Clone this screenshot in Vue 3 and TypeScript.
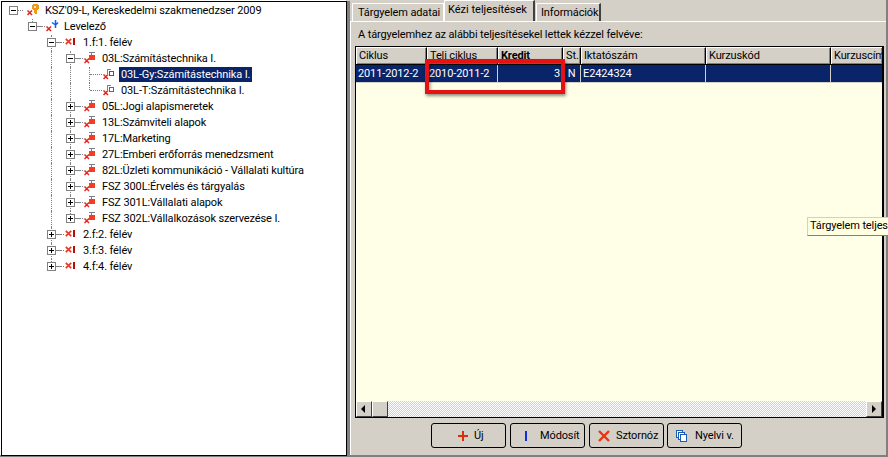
<script setup lang="ts">
type Kind = 'key' | 'branch' | 'sem' | 'subj' | 'blue' | 'red'
interface Row {
  label: string
  kind: Kind
  depth: number
  box?: '+' | '-'
  cells: string[]
  selected?: boolean
}
const subj = (label: string, last = false): Row => ({
  label, kind: 'subj', depth: 3, box: '+', cells: ['', '', 'pass', last ? 'last' : 'tee'],
})
const sem = (label: string, last = false): Row => ({
  label, kind: 'sem', depth: 2, box: '+', cells: ['', '', last ? 'last' : 'tee'],
})
const rows: Row[] = [
  { label: "KSZ'09-L, Kereskedelmi szakmenedzser 2009", kind: 'key', depth: 0, box: '-', cells: [''] },
  { label: 'Levelező', kind: 'branch', depth: 1, box: '-', cells: ['', 'last'] },
  { label: '1.f:1. félév', kind: 'sem', depth: 2, box: '-', cells: ['', '', 'tee'] },
  { label: '03L:Számítástechnika I.', kind: 'subj', depth: 3, box: '-', cells: ['', '', 'pass', 'tee'] },
  { label: '03L-Gy:Számítástechnika I.', kind: 'blue', depth: 4, cells: ['', '', 'pass', 'pass', 'tee'], selected: true },
  { label: '03L-T:Számítástechnika I.', kind: 'red', depth: 4, cells: ['', '', 'pass', 'pass', 'last'] },
  subj('05L:Jogi alapismeretek'),
  subj('13L:Számviteli alapok'),
  subj('17L:Marketing'),
  subj('27L:Emberi erőforrás menedzsment'),
  subj('82L:Üzleti kommunikáció - Vállalati kultúra'),
  subj('FSZ 300L:Érvelés és tárgyalás'),
  subj('FSZ 301L:Vállalati alapok'),
  subj('FSZ 302L:Vállalkozások szervezése I.', true),
  sem('2.f:2. félév'),
  sem('3.f:3. félév'),
  sem('4.f:4. félév', true),
]
const columns = [
  { title: 'Ciklus', width: 71, value: '2011-2012-2', align: 'left' },
  { title: 'Teli ciklus', width: 71, value: '2010-2011-2', align: 'left' },
  { title: 'Kredit', width: 65, value: '3', align: 'right', bold: true },
  { title: 'St.', width: 18, value: 'N', align: 'center' },
  { title: 'Iktatószám', width: 125, value: 'E2424324', align: 'left' },
  { title: 'Kurzuskód', width: 125, value: '', align: 'left' },
  { title: 'Kurzuscím', width: 52, value: '', align: 'left' },
]
const buttons = [
  { label: 'Új', icon: 'plus', gap: 'b-new' },
  { label: 'Módosít', icon: 'bar', gap: 'b-mod' },
  { label: 'Sztornóz', icon: 'x', gap: 'b-del' },
  { label: 'Nyelvi v.', icon: 'docs', gap: 'b-lang' },
]
</script>

<template>
  <div class="screen">
    <section class="tree">
      <div v-for="r in rows" :key="r.label" class="row">
        <span v-for="(c, i) in r.cells" :key="i" class="cell" :class="c">
          <span v-if="i === r.depth && r.box" class="box">
            <span class="h"></span><span v-if="r.box === '+'" class="v"></span>
          </span>
        </span>
        <svg class="ico" width="13" height="13" viewBox="0 0 13 13" shape-rendering="crispEdges">
          <template v-if="r.kind === 'key'">
            <path d="M6 1h5v1h1v4h-1v1h-1v4H8v-1H7V7H6V6H5V2h1z" fill="#f0981c" />
            <rect x="7" y="3" width="2" height="2" fill="#ffe8b0" />
          </template>
          <path v-else-if="r.kind === 'branch'" d="M9.500 1v8M9.500 6L12 3.500M9.500 6L6 3.500" stroke="#1060e8" stroke-width="1.500" fill="none" shape-rendering="auto" />
          <template v-else-if="r.kind === 'sem'">
            <rect x="8" y="3" width="2" height="7" fill="#b01010" />
          </template>
          <template v-else-if="r.kind === 'subj'">
            <path d="M5 1h6v1H8v2H7V2H5z" fill="#808080" />
            <rect x="5" y="4" width="6" height="5" fill="#f03c28" />
          </template>
          <template v-else>
            <path d="M4 2h4v1H5v4H4z" fill="#808080" />
            <rect x="6.500" y="4.500" width="4" height="4" fill="none" :stroke="r.kind === 'blue' ? '#0a60e8' : '#e83020'" stroke-width="1" />
          </template>
          <path v-if="r.kind === 'sem'" d="M0.800 3.800l5.400 5.400M6.200 3.800l-5.400 5.400" stroke="#e83828" stroke-width="1.700" fill="none" shape-rendering="auto" />
          <path v-else d="M0.500 7.500l4.500 4.500M5 7.500l-4.500 4.500" stroke="#e82018" stroke-width="1.500" fill="none" shape-rendering="auto" />
        </svg>
        <span class="label" :class="{ selected: r.selected }">{{ r.label }}</span>
      </div>
    </section>

    <div class="splitter"></div>

    <section class="side">
      <nav class="tabs">
        <span class="tab first">Tárgyelem adatai</span>
        <span class="tab active">Kézi teljesítések</span>
        <span class="tab">Információk</span>
      </nav>
      <div class="panel">
        <p class="intro">A tárgyelemhez az alábbi teljesítésekel lettek kézzel felvéve:</p>
        <div class="grid">
          <div class="head">
            <span
              v-for="c in columns"
              :key="c.title"
              class="th"
              :class="{ bold: c.bold }"
              :style="{ width: c.width + 'px' }"
            >{{ c.title }}</span>
          </div>
          <div class="data">
            <span
              v-for="c in columns"
              :key="c.title"
              class="td"
              :style="{ width: c.width + 'px', textAlign: c.align as 'left' }"
            >{{ c.value }}</span>
          </div>
          <div class="blank"></div>
          <div class="hscroll">
            <span class="sbtn"><i class="arrow left"></i></span>
            <span class="sbtn thumb"></span>
            <span class="track"></span>
            <span class="sbtn"><i class="arrow right"></i></span>
          </div>
          <div class="mark"></div>
        </div>
        <footer class="actions">
          <button v-for="b in buttons" :key="b.label" class="btn" :class="b.gap">
            <svg width="12" height="12" viewBox="0 0 12 12" shape-rendering="crispEdges">
              <path v-if="b.icon === 'plus'" d="M5 1h2v4h4v2H7v4H5V7H1V5h4z" fill="#d8300c" />
              <rect v-else-if="b.icon === 'bar'" x="5" y="1" width="2" height="10" fill="#1030e0" />
              <path v-else-if="b.icon === 'x'" d="M1 1l10 10M11 1L1 11" stroke="#f03010" stroke-width="2.400" fill="none" shape-rendering="auto" />
              <g v-else fill="#fff" stroke="#1a5cb0">
                <rect x="0.500" y="0.500" width="6" height="7" />
                <rect x="2.500" y="2.500" width="6" height="7" />
                <rect x="4.500" y="4.500" width="6" height="7" />
              </g>
            </svg>
            <span>{{ b.label }}</span>
          </button>
        </footer>
      </div>
    </section>

    <div class="tooltip">Tárgyelem teljesítések</div>
  </div>
</template>

<style scoped>
.screen {
  position: relative;
  width: 888px;
  height: 457px;
  overflow: hidden;
  display: flex;
  background: #d4d0c8;
  font: 11px Roboto, "Liberation Sans", Arial, sans-serif;
  letter-spacing: -0.12px;
  color: #000;
}
.tree {
  box-sizing: border-box;
  width: 346px;
  height: 455px;
  margin: 1px 0 0 1px;
  padding-top: 1px;
  border: 1px solid #000;
  background: #fff;
  box-shadow: -1px -1px 0 #fff, -1px 1px 0 #808080, 1px 1px 0 #808080;
}
.row {
  display: flex;
  height: 16px;
  padding-left: 2px;
  white-space: nowrap;
  line-height: 15px;
}
.cell {
  position: relative;
  flex: none;
  width: 19px;
  height: 16px;
}
.cell.pass::before,
.cell.tee::before,
.cell.last::before {
  content: "";
  position: absolute;
  left: 9px;
  top: 0;
  bottom: 0;
  border-left: 1px dotted #808080;
}
.cell.last::before { bottom: 9px; }
.cell.tee::after,
.cell.last::after {
  content: "";
  position: absolute;
  left: 10px;
  top: 7px;
  width: 12px;
  border-top: 1px dotted #808080;
}
.box {
  position: absolute;
  z-index: 1;
  left: 5px;
  top: 3px;
  box-sizing: border-box;
  width: 9px;
  height: 9px;
  border: 1px solid #808080;
  background: #fff;
}
.box::after {
  content: "";
  position: absolute;
  left: 8px;
  top: 3px;
  width: 5px;
  border-top: 1px dotted #808080;
}
.h {
  position: absolute;
  left: 1px;
  top: 3px;
  width: 5px;
  height: 1px;
  background: #000;
}
.v {
  position: absolute;
  left: 3px;
  top: 1px;
  width: 1px;
  height: 5px;
  background: #000;
}
.ico {
  flex: none;
  margin: 0 0 0 4px;
}
.label {
  margin-left: 3px;
  padding: 0 2px;
  height: 15px;
}
.label.selected {
  background: #0a246a;
  color: #fff;
}
.splitter {
  flex: none;
  width: 3px;
  height: 456px;
  margin-top: 1px;
  background: #808080;
}
.side {
  flex: none;
  width: 538px;
  height: 457px;
  display: flex;
  flex-direction: column;
  box-sizing: border-box;
  border-right: 2px solid #808080;
  border-bottom: 2px solid #808080;
}
.tabs {
  display: flex;
  align-items: flex-end;
  height: 21px;
  padding-left: 2px;
  flex: none;
}
.tab {
  box-sizing: border-box;
  height: 18px;
  padding: 2px 5px 0;
  border-top: 1px solid #fff;
  border-left: 1px solid #fff;
  border-right: 2px solid #404040;
  line-height: 14px;
  white-space: nowrap;
}
.tab.first {
  width: 92px;
  border-right: 1px solid #fff;
  padding-left: 5px;
}
.tab.active {
  width: 91px;
  height: 21px;
  padding: 2px 3px 0;
  margin-right: 1px;
  background: #d4d0c8;
  letter-spacing: 0;
}
.tab:last-child { width: 65px; padding-left: 4px; }
.panel {
  flex: 1;
  display: flex;
  flex-direction: column;
  border-top: 1px solid #fff;
  border-left: 1px solid #fff;
  padding: 0 0 0 4px;
}
.intro {
  margin: 6px 0 4px 3px;
  height: 14px;
  line-height: 14px;
}
.grid {
  position: relative;
  box-sizing: border-box;
  width: 529px;
  height: 372px;
  flex: none;
  display: flex;
  flex-direction: column;
  border: 1px solid #000;
  border-width: 1px 2px 1px 1px;
  background: #ffffe8;
}
.head,
.data {
  display: flex;
  flex: none;
  overflow: hidden;
}
.head { height: 18px; background: #000; }
.th {
  flex: none;
  box-sizing: border-box;
  height: 17px;
  padding-left: 2px;
  line-height: 15px;
  background: #d4d0c8;
  border-top: 1px solid #fff;
  border-left: 1px solid #fff;
  border-right: 1px solid #000;
  box-shadow: inset -1px -1px 0 #808080;
  white-space: nowrap;
  overflow: hidden;
}
.th.bold { font-weight: 700; }
.data {
  height: 18px;
  background: #0a246a;
  border-bottom: 1px solid #d4d0c8;
  box-sizing: border-box;
  color: #fff;
}
.td {
  flex: none;
  box-sizing: border-box;
  padding: 0 2px;
  line-height: 17px;
  border-right: 1px solid #d4d0c8;
}
.blank { flex: 1; }
.hscroll {
  display: flex;
  flex: none;
  height: 16px;
}
.sbtn {
  flex: none;
  position: relative;
  box-sizing: border-box;
  width: 16px;
  height: 16px;
  background: #d4d0c8;
  border-top: 1px solid #fff;
  border-left: 1px solid #fff;
  border-right: 1px solid #404040;
  border-bottom: 1px solid #404040;
}
.track {
  flex: 1;
  background-color: #d4d0c8;
  background-image: conic-gradient(#fff 25%, #d4d0c8 0 50%, #fff 0 75%, #d4d0c8 0);
  background-size: 2px 2px;
}
.arrow {
  position: absolute;
  top: 3px;
  border-style: solid;
  border-width: 4px 0;
  border-color: transparent;
}
.arrow.left { left: 4px; border-right: 4px solid #000; }
.arrow.right { left: 5px; border-left: 4px solid #000; }
.mark {
  position: absolute;
  left: 69px;
  top: 12px;
  box-sizing: border-box;
  width: 140px;
  height: 35px;
  border: 4px solid #e41212;
  box-shadow: 1px 2px 3px rgba(0, 0, 0, 0.45), inset 2px 2px 3px rgba(0, 0, 0, 0.3);
}
.actions {
  display: flex;
  padding: 5px 0 0 76px;
}
.btn {
  flex: none;
  display: flex;
  align-items: center;
  box-sizing: border-box;
  width: 75px;
  height: 25px;
  margin: 0 4px 0 0;
  padding: 0;
  background: #d4d0c8;
  border: 1px solid #000;
  border-radius: 3px;
  font: inherit;
  letter-spacing: inherit;
  color: #000;
}
.btn svg { flex: none; }
.b-new { padding-left: 25px; gap: 5px; }
.b-mod { padding-left: 9px; gap: 8px; }
.b-del { padding-left: 8px; gap: 6px; }
.b-lang { padding-left: 8px; gap: 7px; margin-left: -1px; }
.tooltip {
  position: absolute;
  left: 807px;
  top: 217px;
  box-sizing: border-box;
  width: 120px;
  height: 19px;
  padding-left: 2px;
  line-height: 16px;
  white-space: nowrap;
  background: #ffffe1;
  border: 1px solid #808080;
  border-top-color: #d4d0c8;
  border-left-color: #d4d0c8;
}
</style>
<style>
html, body { margin: 0; background: #fff; overflow: hidden; }
</style>
